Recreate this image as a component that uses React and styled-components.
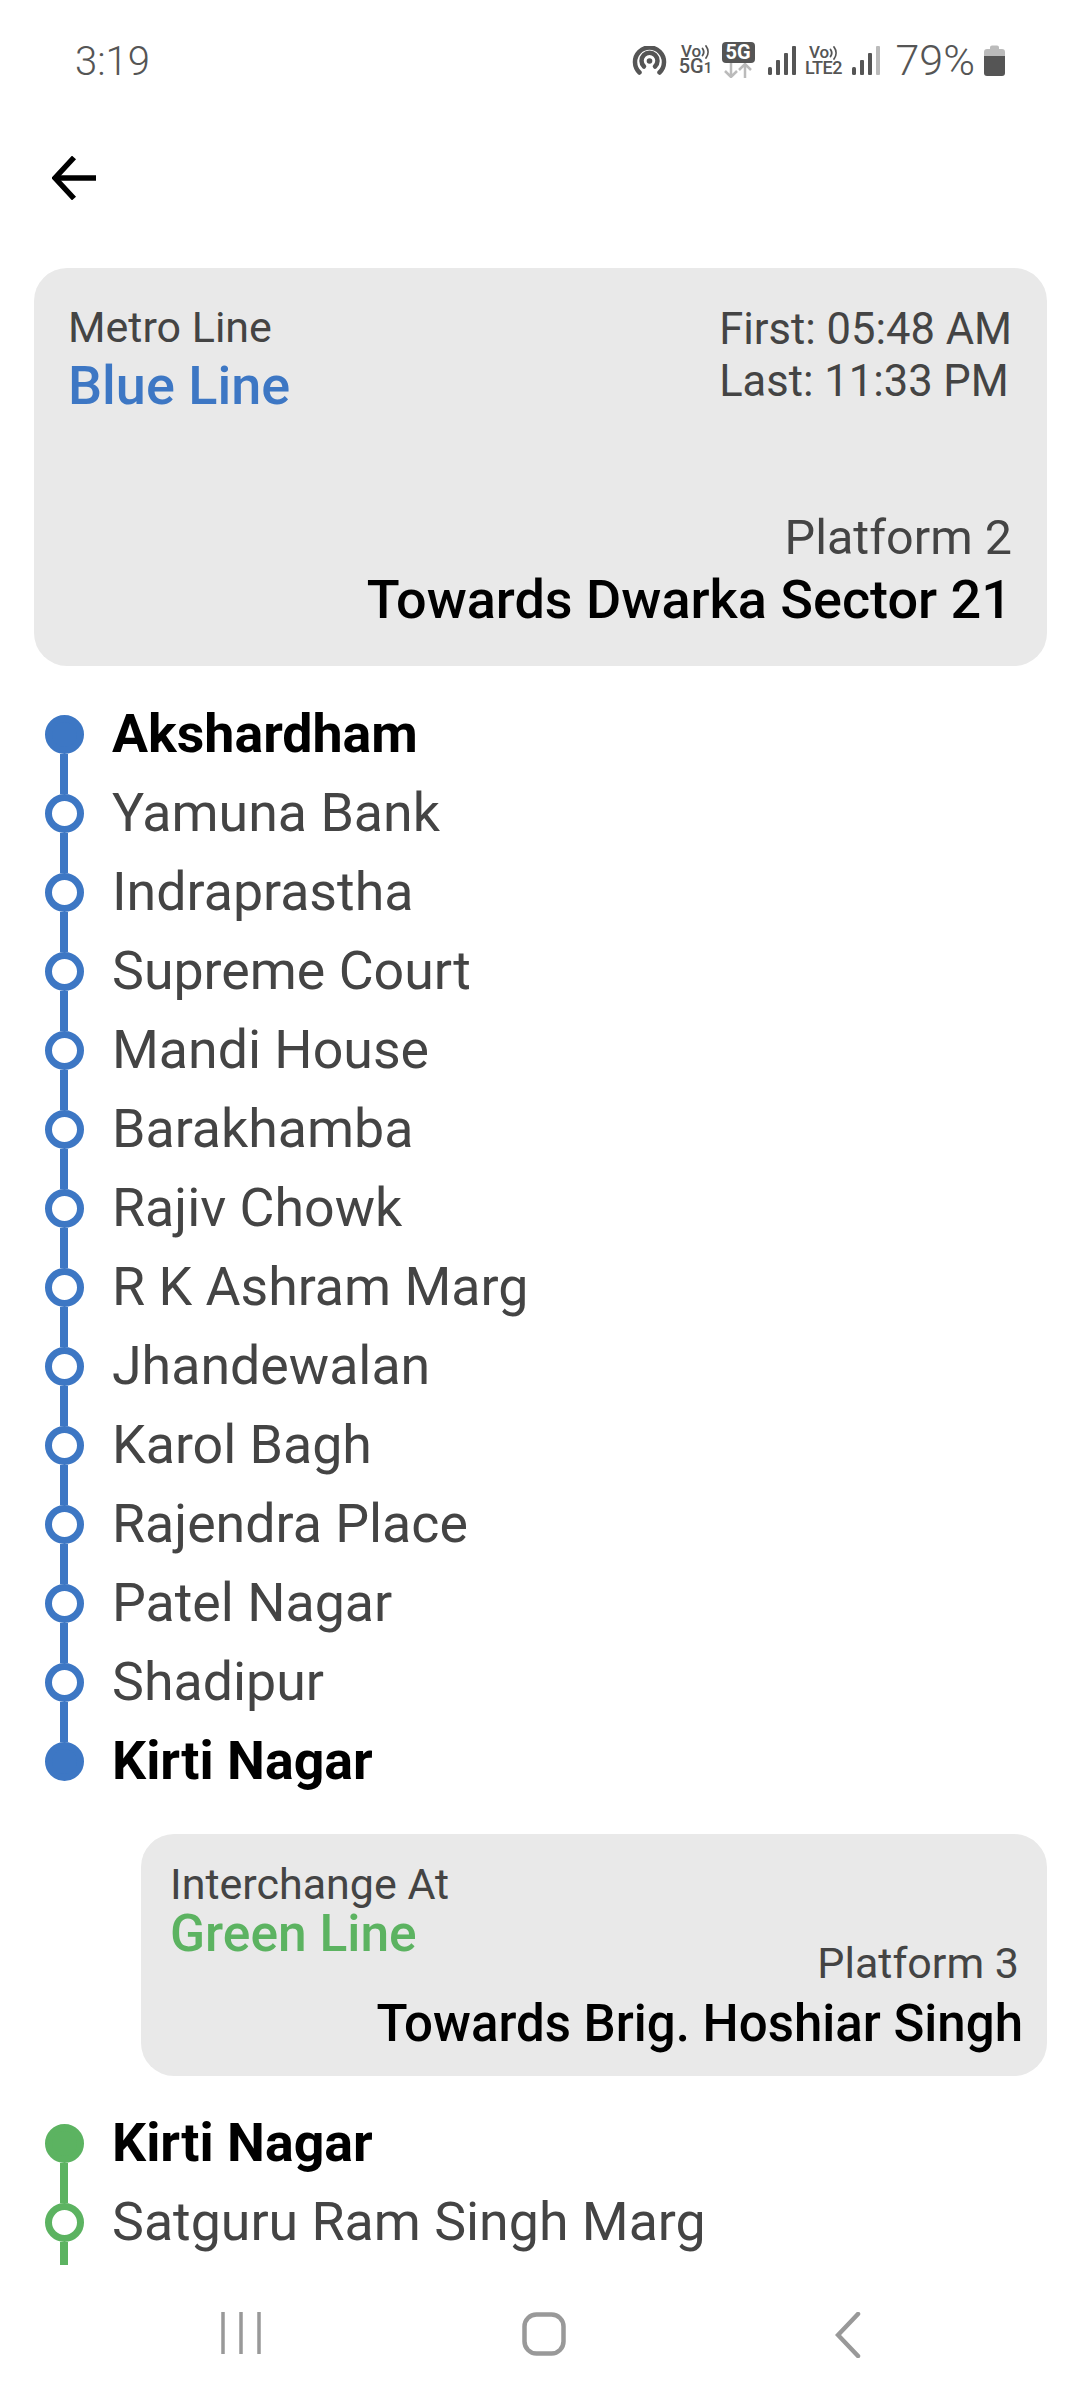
import React from "react";
import styled, { createGlobalStyle } from "styled-components";

const blue = "#3d77c4";
const green = "#5cb361";

const GlobalStyle = createGlobalStyle`
  html, body {
    margin: 0;
    padding: 0;
    background: #fff;
    font-family: Roboto, "Liberation Sans", sans-serif;
  }
`;

const Page = styled.div`
  width: 1080px;
  height: 2400px;
  display: flex;
  flex-direction: column;
  overflow: hidden;
  background: #fff;
`;

const StatusBar = styled.div`
  height: 120px;
  flex: none;
  display: flex;
  align-items: flex-start;
  justify-content: space-between;
  padding: 38px 75px 0;
  box-sizing: border-box;
  color: #555;
`;

const Clock = styled.div`
  font-size: 40px;
  font-weight: 300;
  line-height: 48px;
`;

const StatusIcons = styled.div`
  display: flex;
  align-items: center;
  height: 48px;
  margin-top: -2px;
`;

const Stack = styled.div`
  display: flex;
  flex-direction: column;
  align-items: center;
  font-weight: 500;
  white-space: nowrap;
  margin-left: ${(p) => p.$ml || 0}px;
  width: ${(p) => p.$w}px;
`;

const VoRow = styled.div`
  display: flex;
  align-items: center;
  font-size: 17px;
  line-height: 15px;
`;

const NetworkRow = styled.div`
  font-size: ${(p) => p.$size}px;
  line-height: 15px;
  letter-spacing: ${(p) => p.$spacing || 0}px;
`;

const SimNumber = styled.span`
  font-size: 15px;
`;

const FiveGBox = styled.div`
  width: 33px;
  height: 21px;
  border-radius: 4px;
  background: #555;
  color: #fff;
  font-size: 20px;
  font-weight: 700;
  line-height: 21px;
  text-align: center;
`;

const Percent = styled.div`
  font-size: 43px;
  font-weight: 300;
  line-height: 48px;
  margin-left: 16px;
`;

const BackBar = styled.div`
  height: 148px;
  flex: none;
  padding: 36px 0 0 52px;
  box-sizing: border-box;
`;

const Card = styled.div`
  margin-left: ${(p) => p.$left}px;
  margin-right: 33px;
  height: ${(p) => p.$height}px;
  flex: none;
  box-sizing: border-box;
  background: #e9e9e9;
  border-radius: 33px;
  display: flex;
  flex-direction: column;
  justify-content: space-between;
`;

const MainCard = styled(Card)`
  padding: 33px 35px 35px 34px;
`;

const InterchangeCard = styled(Card)`
  margin-top: 33px;
  padding: 27px 24px 22px 29px;
`;

const CardTop = styled.div`
  display: flex;
  justify-content: space-between;
`;

const InterchangeHead = styled.div`
  height: 71px;
`;

const Label = styled.div`
  font-size: ${(p) => p.$size}px;
  line-height: ${(p) => p.$lh}px;
  padding-right: ${(p) => p.$pr || 0}px;
  color: #444;
`;

const LineName = styled.div`
  font-size: ${(p) => p.$size}px;
  line-height: ${(p) => p.$lh}px;
  font-weight: 500;
  color: ${(p) => p.$color};
`;

const Timings = styled.div`
  font-size: 43.5px;
  line-height: 52px;
  padding-top: 3px;
  color: #444;
`;

const CardBottom = styled.div`
  text-align: right;
`;

const Towards = styled.div`
  font-size: ${(p) => p.$size}px;
  line-height: ${(p) => p.$lh}px;
  font-weight: 500;
  color: #000;
`;

const StationList = styled.div`
  flex: none;
  margin-top: ${(p) => p.$top}px;
  padding-left: 44px;
`;

const Station = styled.div`
  height: 79px;
  display: flex;
  align-items: stretch;
`;

const Rail = styled.div`
  width: 40px;
  flex: none;
  display: flex;
  flex-direction: column;
  align-items: center;
  margin-right: 28px;
`;

const Segment = styled.div`
  width: 8px;
  flex: 1;
  background: ${(p) => (p.$hidden ? "transparent" : p.$color)};
`;

const RailTail = styled.div`
  width: 8px;
  height: 3px;
  margin-left: 16px;
  background: ${(p) => p.$color};
`;

const Dot = styled.div`
  width: 39px;
  height: 39px;
  flex: none;
  box-sizing: border-box;
  border-radius: 50%;
  border: 7px solid ${(p) => p.$color};
  background: ${(p) => (p.$solid ? p.$color : "#fff")};
`;

const StationName = styled.div`
  font-size: 53.7px;
  line-height: 77px;
  font-weight: ${(p) => (p.$major ? 700 : 400)};
  color: ${(p) => (p.$major ? "#000" : "#444")};
  white-space: nowrap;
`;

const NavBar = styled.div`
  flex: 1;
  display: grid;
  grid-template-columns: 261px 305px 295px;
  padding-top: 47px;
`;

const NavSlot = styled.div`
  justify-self: end;
`;

const Spacer = styled.span`
  width: ${(p) => p.$w}px;
  flex: none;
`;

const HotspotIcon = () => (
  <svg width="35" height="29" viewBox="0 0 35 29" fill="none" stroke="#555" strokeWidth="4.5" strokeLinecap="round">
    <path d="M7.5 26.5 A14.5 14.5 0 1 1 27.5 26.5" />
    <path d="M12 20.5 A8 8 0 1 1 23 20.5" />
    <circle cx="17.5" cy="15" r="2.8" fill="#555" stroke="none" />
  </svg>
);

const VoWaves = () => (
  <svg width="9" height="14" viewBox="0 0 9 14" fill="none" stroke="#555" strokeWidth="1.8" strokeLinecap="round">
    <path d="M1.5 3.5a6 6 0 0 1 0 7" />
    <path d="M5 1a10 10 0 0 1 0 12" />
  </svg>
);

const SignalIcon = ({ faded }) => (
  <svg width="28" height="29" viewBox="0 0 28 29" fill="#555">
    <rect x="0" y="21" width="4" height="8" rx="1.5" />
    <rect x="8" y="14" width="4" height="15" rx="1" />
    <rect x="16" y="7" width="4" height="22" rx="1" />
    <rect x="24" y="0" width="4" height="29" rx="1" fill={faded ? "#bbb" : "#555"} />
  </svg>
);

const ArrowsIcon = () => (
  <svg width="30" height="15" viewBox="0 0 30 15" fill="none" stroke="#bbb" strokeWidth="2.5">
    <path d="M8 0V13M2 8l6 6 6-6" />
    <path d="M22 15V2M16 7l6-6 6 6" />
  </svg>
);

const BatteryIcon = () => (
  <svg width="21" height="31" viewBox="0 0 21 31" style={{ marginLeft: 9 }}>
    <path d="M6 2.5a2 2 0 0 1 2-2h5a2 2 0 0 1 2 2V4h3a3 3 0 0 1 3 3v4H0V7a3 3 0 0 1 3-3h3z" fill="#bbb" />
    <path d="M0 11h21v17a3 3 0 0 1-3 3H3a3 3 0 0 1-3-3z" fill="#555" />
  </svg>
);

const BackArrow = () => (
  <svg width="44" height="44" viewBox="0 0 44 44" fill="none" stroke="#000" strokeWidth="5.5">
    <path d="M44 22H3" />
    <path d="M22 1.5L3 22l19 20.5" />
  </svg>
);

const blueStations = [
  ["Akshardham", true],
  ["Yamuna Bank"],
  ["Indraprastha"],
  ["Supreme Court"],
  ["Mandi House"],
  ["Barakhamba"],
  ["Rajiv Chowk"],
  ["R K Ashram Marg"],
  ["Jhandewalan"],
  ["Karol Bagh"],
  ["Rajendra Place"],
  ["Patel Nagar"],
  ["Shadipur"],
  ["Kirti Nagar", true],
];

const StationRow = ({ name, major, color, first, last }) => (
  <Station>
    <Rail>
      <Segment $color={color} $hidden={first} />
      <Dot $color={color} $solid={major} />
      <Segment $color={color} $hidden={last} />
    </Rail>
    <StationName $major={major}>{name}</StationName>
  </Station>
);

const App = () => (
  <Page>
    <GlobalStyle />
    <StatusBar>
      <Clock>3:19</Clock>
      <StatusIcons>
        <HotspotIcon />
        <Stack $w={32} $ml={13}>
          <VoRow>Vo<VoWaves /></VoRow>
          <NetworkRow $size={20}>5G<SimNumber>1</SimNumber></NetworkRow>
        </Stack>
        <Stack $w={33} $ml={10}>
          <FiveGBox>5G</FiveGBox>
          <ArrowsIcon />
        </Stack>
        <Spacer $w={13} />
        <SignalIcon />
        <Stack $w={40} $ml={8}>
          <VoRow>Vo<VoWaves /></VoRow>
          <NetworkRow $size={18} $spacing={-0.5}>LTE2</NetworkRow>
        </Stack>
        <Spacer $w={8} />
        <SignalIcon faded />
        <Percent>79%</Percent>
        <BatteryIcon />
      </StatusIcons>
    </StatusBar>

    <BackBar>
      <BackArrow />
    </BackBar>

    <MainCard $left={34} $height={398}>
      <CardTop>
        <div>
          <Label $size={43} $lh={52}>Metro Line</Label>
          <LineName $size={54} $lh={66} $color={blue}>Blue Line</LineName>
        </div>
        <Timings>
          First: 05:48 AM
          <br />
          Last: 11:33 PM
        </Timings>
      </CardTop>
      <CardBottom>
        <Label $size={48.5} $lh={62}>Platform 2</Label>
        <Towards $size={54} $lh={62}>Towards Dwarka Sector 21</Towards>
      </CardBottom>
    </MainCard>

    <StationList $top={29}>
      {blueStations.map(([name, major], i) => (
        <StationRow
          key={name}
          name={name}
          major={major}
          color={blue}
          first={i === 0}
          last={i === blueStations.length - 1}
        />
      ))}
    </StationList>

    <InterchangeCard $left={141} $height={242}>
      <InterchangeHead>
        <Label $size={43} $lh={46}>Interchange At</Label>
        <LineName $size={51.5} $lh={54} $color={green}>Green Line</LineName>
      </InterchangeHead>
      <CardBottom>
        <Label $size={43} $pr={4} $lh={62}>Platform 3</Label>
        <Towards $size={51} $lh={60}>Towards Brig. Hoshiar Singh</Towards>
      </CardBottom>
    </InterchangeCard>

    <StationList $top={28}>
      <StationRow name="Kirti Nagar" major color={green} first />
      <StationRow name="Satguru Ram Singh Marg" color={green} />
      <RailTail $color={green} />
    </StationList>

    <NavBar>
      <NavSlot>
        <svg width="40" height="42" viewBox="0 0 40 42" stroke="#999" strokeWidth="3.5">
          <path d="M2 0v42M20 0v42M38 0v42" />
        </svg>
      </NavSlot>
      <NavSlot>
        <svg width="44" height="44" viewBox="0 0 44 44" fill="none" stroke="#999" strokeWidth="4.5">
          <rect x="2.5" y="2.5" width="39" height="39" rx="12" />
        </svg>
      </NavSlot>
      <NavSlot>
        <svg width="26" height="46" viewBox="0 0 26 46" fill="none" stroke="#999" strokeWidth="4.5" strokeLinecap="round">
          <path d="M23 2L3 23l20 21" />
        </svg>
      </NavSlot>
    </NavBar>
  </Page>
);

export default App;
